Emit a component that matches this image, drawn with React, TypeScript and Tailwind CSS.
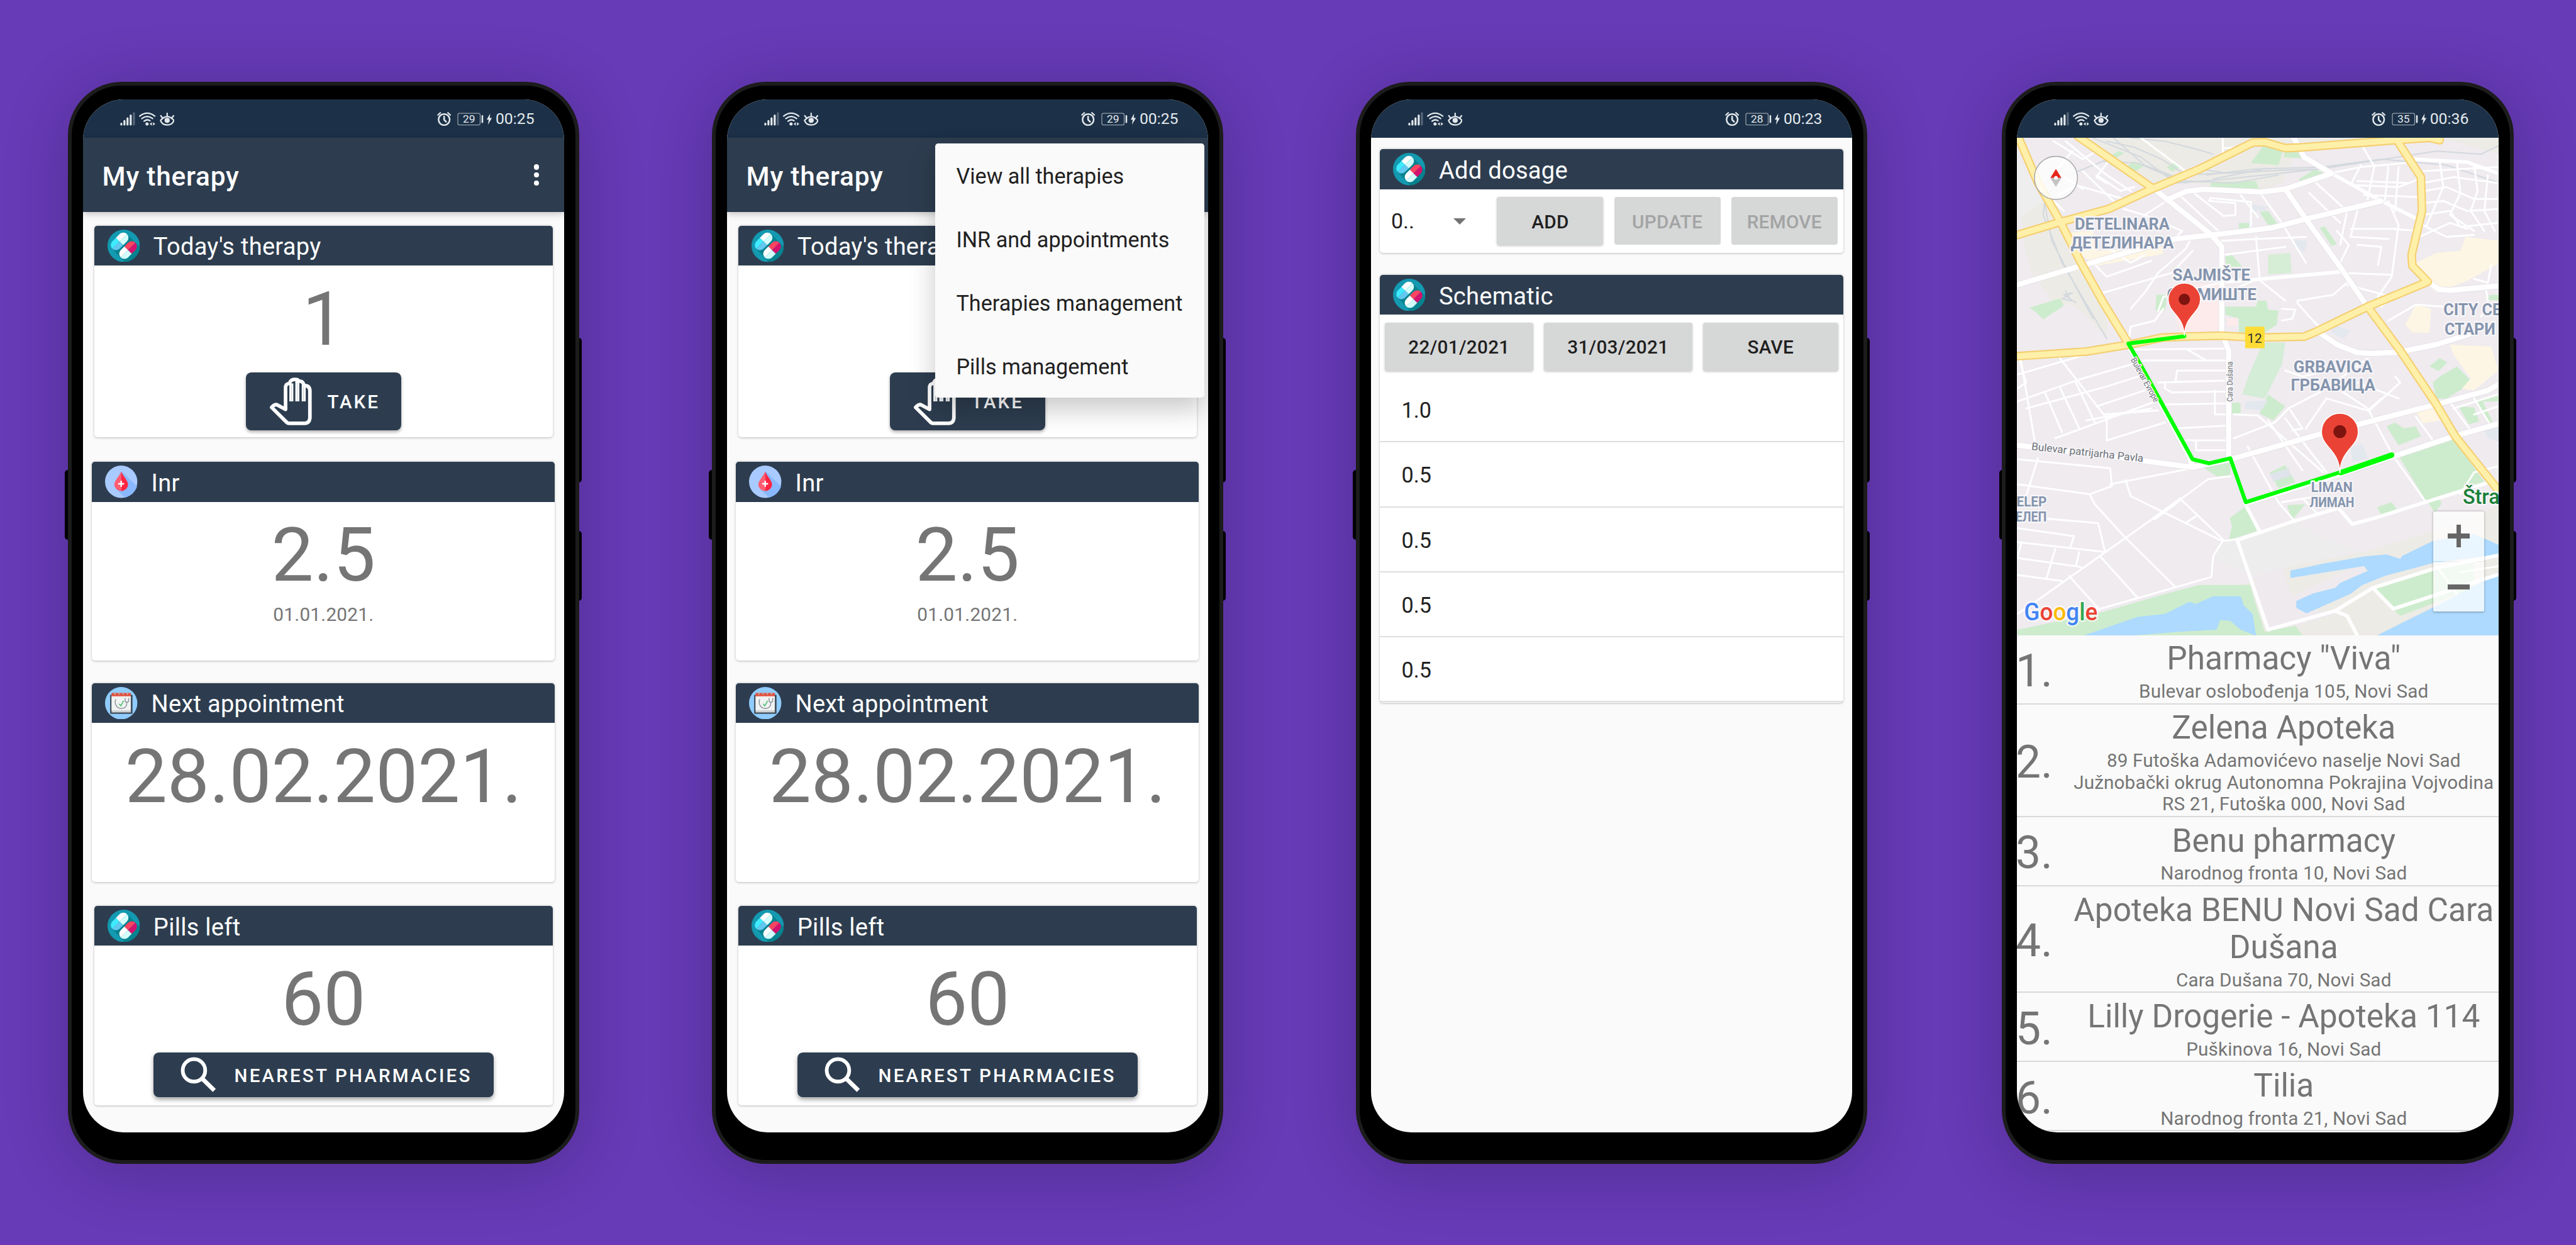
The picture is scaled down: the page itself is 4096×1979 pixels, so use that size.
import React from "react";

/* ---------- status bar ---------- */

function StatusBar({ battery, time }: { battery: string; time: string }) {
  return (
    <div className="flex h-[64px] shrink-0 items-center justify-between bg-[#1c3148] pr-[50px] pl-[62px] text-[#e4e9ed]">
      <svg className="h-[23.3px] w-[91.3px]" viewBox="34 50 274 70" fill="none" stroke="currentColor" strokeLinecap="round">
        <path d="M40 109v4M55.500 95v18M71 82v31M87 68v45" strokeWidth="10" />
        <path d="M103 56v57" strokeWidth="10" opacity="0.3" />
        <path d="M132 71Q170 41 208 71M143 83Q170 62 197 83M154 96Q170 84 184 94" strokeWidth="7" />
        <circle cx="169" cy="110" r="8" fill="currentColor" stroke="none" />
        <path d="M193 101v18l-11-9zM199 101v18l11-9z" fill="currentColor" stroke="none" />
        <path d="M237 92Q270 54 304 92Q296 115 270 115Q244 115 237 92Z" strokeWidth="7" />
        <circle cx="270" cy="92" r="13" fill="currentColor" stroke="none" />
        <path d="M270 57v14M238 69l8 10M302 69l-8 10" strokeWidth="7" />
      </svg>
      <div className="flex items-center gap-[6px]">
        <svg className="h-[23.3px] w-[91.7px]" viewBox="33 50 275 70" fill="none" stroke="currentColor" strokeLinecap="round">
          <circle cx="68" cy="88" r="28" strokeWidth="8" />
          <path d="M68 73v16l10 10" strokeWidth="8" strokeLinejoin="round" />
          <path d="M37 65l12-11M99 65l-12-11" strokeWidth="7" />
          <rect x="137" y="57" width="112" height="58" rx="8" strokeWidth="4" opacity="0.6" />
          <path d="M260 70v31" strokeWidth="8" />
          <path d="M299 58l-17 31h10l-4 25 20-34h-11z" fill="currentColor" stroke="none" />
          <text x="193" y="105" textAnchor="middle" fontSize="55" fill="currentColor" stroke="none" fontFamily="Roboto, sans-serif">
            {battery}
          </text>
        </svg>
        <span className="pt-[2px] text-[26px] leading-none">{time}</span>
      </div>
    </div>
  );
}

/* ---------- icons ---------- */

function PillIcon() {
  return (
    <svg className="size-[54px] shrink-0" viewBox="60 41 162 162">
      <defs>
        <clipPath id="pill-disc">
          <circle cx="141" cy="122" r="81" />
        </clipPath>
      </defs>
      <circle cx="141" cy="122" r="81" fill="#1399b0" />
      <g clipPath="url(#pill-disc)">
        <path d="M158 64L250 156L216 240L190 250L84 137Z" fill="#05838f" />
      </g>
      <g transform="translate(120.500 100) rotate(-45)">
        <path d="M0-26H-26A26 26 0 0 0-52 0H0Z" fill="#3feaff" />
        <path d="M0 26H-26A26 26 0 0 1-52 0H0Z" fill="#62c8f0" />
        <path d="M0-26H26A26 26 0 0 1 52 0H0Z" fill="#ffffff" />
        <path d="M0 26H26A26 26 0 0 0 52 0H0Z" fill="#d2fdfa" />
      </g>
      <g transform="translate(163 143.500) rotate(-45)">
        <path d="M0-26H-26A26 26 0 0 0-52 0H0Z" fill="#ffffff" />
        <path d="M0 26H-26A26 26 0 0 1-52 0H0Z" fill="#d2fdfa" />
        <path d="M0-26H26A26 26 0 0 1 52 0H0Z" fill="#ff4460" />
        <path d="M0 26H26A26 26 0 0 0 52 0H0Z" fill="#d4126e" />
      </g>
    </svg>
  );
}

function DropIcon() {
  return (
    <svg className="size-[54px] shrink-0" viewBox="0 0 54 54">
      <circle cx="27" cy="27" r="27" fill="#a9caff" />
      <path d="M28 10L53.500 35A27 27 0 0 1 33 53.300L18 38Z" fill="#8ab8fe" />
      <path d="M27 10C24 18 15.500 25 15.500 32A11.500 11 0 0 0 27 42.500Z" fill="#ff5d70" />
      <path d="M27 10C30 18 38.500 25 38.500 32A11.500 11 0 0 1 27 42.500Z" fill="#ff2541" />
      <path d="M27 25.500v10M22 30.500h10" stroke="#fff" strokeWidth="2.600" />
    </svg>
  );
}

function CalendarIcon() {
  return (
    <svg className="size-[54px] shrink-0" viewBox="0 0 54 54">
      <circle cx="27" cy="27" r="27" fill="#90ccff" />
      <rect x="8.500" y="13" width="37.500" height="32" rx="1.500" fill="#43505c" />
      <rect x="11" y="16" width="32" height="26.500" fill="#cfd3d4" />
      <rect x="11" y="14" width="32" height="25" fill="#f1f2f2" />
      <rect x="11" y="10" width="32" height="5.500" fill="#e2503f" />
      <path d="M16.500 8v5M23.500 8v5M30.500 8v5M37.500 8v5" stroke="#b9b3b0" strokeWidth="2" />
      <path d="M18 20.500C15 27 19 36 27 36S36.500 31 36.500 26M33.500 18.500v4a3 3 0 0 0 6 0v-4" stroke="#8a9299" strokeWidth="1.500" fill="none" />
      <path d="M23.500 28l3 3.500L31 23" stroke="#43c06d" strokeWidth="1.600" fill="none" />
    </svg>
  );
}

function HandIcon() {
  return (
    <svg className="h-[80px] w-[70px] shrink-0" viewBox="62 32 210 240" fill="none" stroke="#fff">
      <path
        d="M71 182Q84 167 97 168L141 192V78Q143 64 161 62Q166 42 186 42T207 51Q230 48 232 72Q262 72 263 98V236Q260 261 238 262H158Q152 262 147 257Z"
        strokeWidth="18"
        strokeLinejoin="round"
      />
      <path d="M170 62v90M200 50v102M232 72v80" strokeWidth="20" />
      <path d="M171 70v80M201 60v90M231 80v70" strokeWidth="2" stroke="#a9b1b9" />
    </svg>
  );
}

function SearchIcon() {
  return (
    <svg className="size-[59px] shrink-0" viewBox="0 0 59 59" fill="none" stroke="#fff">
      <circle cx="22.500" cy="22.500" r="18.800" strokeWidth="6.200" />
      <path d="M36 36L56.500 56" strokeWidth="7" />
    </svg>
  );
}

/* ---------- shared pieces ---------- */

function Phone({ children }: { children: React.ReactNode }) {
  return (
    <div className="relative h-[1807px] w-[855px] shrink-0">
      <div className="absolute top-[648px] -left-[5px] h-[117px] w-[20px] rounded-[5px] bg-black" />
      <div className="absolute top-[427px] -right-[4px] h-[242px] w-[20px] rounded-[5px] bg-black" />
      <div className="absolute top-[750px] -right-[4px] h-[117px] w-[20px] rounded-[5px] bg-black" />
      <div className="relative h-full w-full rounded-[90px] border-[7px] border-[#1c1c1c] bg-black px-[19px] pt-[23px] pb-[46px] shadow-[0_12px_110px_rgba(0,0,0,0.2)]">
        <div className="relative flex h-full flex-col overflow-hidden rounded-[68px] bg-[#fafafa]">{children}</div>
      </div>
    </div>
  );
}

function Card({ icon, title, className, children }: { icon: React.ReactNode; title: string; className: string; children: React.ReactNode }) {
  return (
    <section className={`flex flex-col overflow-hidden rounded-[5px] bg-white shadow-[0_1px_4px_rgba(0,0,0,0.25)] ${className}`}>
      <header className="flex h-[66.500px] shrink-0 items-center gap-[23px] bg-[#2d3d4f] pl-[22px] text-white">
        {icon}
        <h2 className="pt-[6px] text-[40px] leading-[46px] tracking-[0.007em]">{title}</h2>
      </header>
      {children}
    </section>
  );
}

function BigValue({ children }: { children: React.ReactNode }) {
  return <p className="mt-[16.500px] text-center text-[125.500px] leading-[146px] text-[#757575]">{children}</p>;
}

function TherapyScreen({ menuOpen = false }: { menuOpen?: boolean }) {
  const items = ["View all therapies", "INR and appointments", "Therapies management", "Pills management"];
  return (
    <>
      <StatusBar battery="29" time="00:25" />
      <div className="z-10 flex h-[124px] shrink-0 items-center justify-between bg-[#2d3d4f] pr-[42px] pl-[32.500px] shadow-[0_3px_12px_rgba(0,0,0,0.25)]">
        <h1 className="pt-[6px] text-[44.600px] leading-[52px] font-medium tracking-[0.018em] text-white">My therapy</h1>
        <div className="flex flex-col gap-[4.500px]">
          <i className="size-[9px] rounded-full bg-white" />
          <i className="size-[9px] rounded-full bg-white" />
          <i className="size-[9px] rounded-full bg-white" />
        </div>
      </div>

      <Card icon={<PillIcon />} title="Today's therapy" className="mx-[19px] mt-[22.500px] h-[354px]">
        <BigValue>1</BigValue>
        <button className="mt-[16.500px] flex h-[96.500px] w-[260px] items-center self-center rounded-[9px] bg-[#2d3d4f] pl-[40.500px] text-[31px] font-medium tracking-[0.1em] text-white shadow-[0_3px_6px_rgba(0,0,0,0.3)]">
          <HandIcon />
          <span className="pt-[3px] pl-[26px]">TAKE</span>
        </button>
      </Card>

      <Card icon={<DropIcon />} title="Inr" className="mx-[15.500px] mt-[41px] h-[332px]">
        <BigValue>2.5</BigValue>
        <p className="mt-[8px] text-center text-[31.300px] leading-[36px] tracking-[0.008em] text-[#757575]">01.01.2021.</p>
      </Card>

      <Card icon={<CalendarIcon />} title="Next appointment" className="mx-[15.500px] mt-[37px] h-[332px]">
        <BigValue>28.02.2021.</BigValue>
      </Card>

      <Card icon={<PillIcon />} title="Pills left" className="mx-[19px] mt-[40.500px] h-[332.500px]">
        <BigValue>60</BigValue>
        <button className="mt-[16px] flex h-[74px] w-[568px] items-center self-center rounded-[9px] bg-[#2d3d4f] pl-[45px] text-[31px] font-medium tracking-[0.108em] text-white shadow-[0_4px_8px_rgba(0,0,0,0.35)]">
          <SearchIcon />
          <span className="pt-[4px] pl-[31px] whitespace-nowrap">NEAREST PHARMACIES</span>
        </button>
      </Card>

      {menuOpen && (
        <ul className="absolute top-[73px] right-[6px] z-20 w-[450.500px] rounded-[5px] bg-[#fafafa] shadow-[0_18px_44px_rgba(0,0,0,0.22)]">
          {items.map((item) => (
            <li key={item} className="flex h-[106.200px] items-center pt-[4px] pl-[35.500px] text-[35.900px] text-[#212121]">
              {item}
            </li>
          ))}
        </ul>
      )}
    </>
  );
}

/* ---------- dosage screen ---------- */

function GreyButton({ label, className, disabled = false }: { label: string; className: string; disabled?: boolean }) {
  return (
    <button
      disabled={disabled}
      className={`flex items-center justify-center rounded-[4px] bg-[#d6d7d7] pt-[4px] text-[31.200px] font-medium tracking-[0.01em] ${
        disabled ? "text-[#a3a4a4]" : "text-[#1f1f1f] shadow-[0_2px_4px_rgba(0,0,0,0.22)]"
      } ${className}`}
    >
      {label}
    </button>
  );
}

function DosageScreen() {
  return (
    <>
      <StatusBar battery="28" time="00:23" />
      <Card icon={<PillIcon />} title="Add dosage" className="mx-[15px] mt-[19px] h-[173px]">
        <div className="flex items-start gap-[18px] pt-[13.500px] pr-[9.500px]">
          <div className="flex h-[79px] w-[178px] items-center pt-[2px] pl-[19px]">
            <span className="w-[104px] text-[35.700px] text-[#212121]">0..</span>
            <i className="border-x-[11px] border-t-[11px] border-x-transparent border-t-[#737373]" />
          </div>
          <GreyButton label="ADD" className="h-[79.500px] flex-1" />
          <GreyButton label="UPDATE" className="h-[79.500px] flex-1" disabled />
          <GreyButton label="REMOVE" className="h-[79.500px] flex-1" disabled />
        </div>
      </Card>
      <Card icon={<PillIcon />} title="Schematic" className="mx-[15px] mt-[37px] h-[714px]">
        <div className="flex gap-[17.500px] px-[8.500px] pt-[13px]">
          <GreyButton label="22/01/2021" className="h-[80px] w-[248px]" />
          <GreyButton label="31/03/2021" className="h-[80px] w-[248.500px]" />
          <GreyButton label="SAVE" className="h-[80px] flex-1" />
        </div>
        <ul className="pt-[12px] text-[35.900px] text-[#212121]">
          {["1.0", "0.5", "0.5", "0.5", "0.5"].map((dose, i) => (
            <li key={i} className="flex h-[108.500px] items-center border-b-[2.200px] border-[#dedede] pt-[4px] pl-[36.500px]">
              {dose}
            </li>
          ))}
        </ul>
      </Card>
    </>
  );
}

/* ---------- pharmacies screen ---------- */

const px = (x: number) => Math.round((x - 70) * 5.74) / 10;
const py = (y: number) => Math.round((y / 3 - 111) * 10) / 10;
function project(points: string) {
  return points
    .split(" ")
    .map((p) => {
      const [x, y] = p.split(",").map(Number);
      return `${px(x)},${py(y)}`;
    })
    .join(" ");
}

const AREAS: [string, string][] = [
  ["#edebe6", "90,334 620,334 1160,334 1160,350 890,378 840,560 780,600 560,560 470,560 250,334"],
  ["#edebe6", "1300,334 1480,334 1480,420 1340,350"],
  ["#edebe6", "70,560 130,580 200,780 250,960 330,1240 330,1330 240,1180 170,1150 110,1010 90,880"],
  ["#eeeeef", "70,430 120,560 150,650 70,740"],
  ["#edebe6", "600,2640 745,2560 860,2480 1100,2400 1290,2300 1480,2170 1480,2840 760,2840 740,2600"],
  ["#efeaee", "840,2480 870,2630 1080,2460 1090,2570 880,2690 1000,2720 860,2790 800,2800 750,2570"],
  ["#ededee", "680,2350 880,2250 960,2340 1070,2400 860,2480 750,2530 660,2460 640,2420"],
  ["#cdeccd", "785,375 845,390 830,470 750,460"],
  ["#cdeccd", "850,400 880,395 910,438 845,430"],
  ["#cdeccd", "385,480 410,450 437,475 410,505"],
  ["#cdeccd", "340,425 365,400 382,410 355,435"],
  ["#cdeccd", "505,480 525,458 545,478 520,503"],
  ["#cdeccd", "635,555 765,550 775,598 630,590"],
  ["#cdeccd", "890,540 935,492 965,512 890,572"],
  ["#cdeccd", "715,760 745,760 745,790 715,790"],
  ["#cdeccd", "775,705 800,700 830,770 800,770"],
  ["#cdeccd", "950,785 965,778 1000,865 985,875"],
  ["#d6edd6", "800,920 865,910 868,1010 800,1018"],
  ["#cdeccd", "675,930 695,920 725,980 680,985"],
  ["#cdeccd", "675,1180 765,1180 770,1150 795,1150 800,1195 830,1200 825,1270 790,1310 715,1310 715,1240 675,1220"],
  ["#cdeccd", "475,1120 505,1120 500,1200 472,1200"],
  ["#cdeccd", "105,1185 195,1138 205,1175 145,1243 125,1210"],
  ["#d4edd6", "785,1360 850,1360 840,1470 790,1640 725,1620 740,1540"],
  ["#cdeccd", "800,1620 850,1680 815,1750 775,1715"],
  ["#cdeccd", "695,1662 720,1662 720,1715 695,1715"],
  ["#cdeccd", "1270,1480 1300,1438 1322,1460 1297,1502"],
  ["#cdeccd", "1280,1560 1300,1530 1350,1480 1395,1560 1320,1640 1290,1640"],
  ["#cdeccd", "1355,1680 1400,1685 1415,1755 1385,1770"],
  ["#cdeccd", "1400,1650 1470,1620 1470,1655 1425,1655 1455,1760 1440,1760"],
  ["#cdeccd", "1145,1780 1170,1760 1195,1790 1230,1780 1245,1830 1180,1875"],
  ["#cdeccd", "1183,1935 1340,1845 1435,2070 1260,2155"],
  ["#cdeccd", "1265,2160 1300,2145 1305,2170 1285,2210"],
  ["#cdeccd", "1118,2185 1160,2160 1175,2195 1130,2230"],
  ["#cdeccd", "805,2010 850,1975 880,2060 830,2090"],
  ["#dfe3ea", "805,2020 860,1990 865,2030 815,2055"],
  ["#cdeccd", "855,2175 908,2170 870,2250"],
  ["#cdeccd", "610,1985 690,1960 690,2025 650,2030"],
  ["#cdeccd", "735,2180 775,2300 685,2350 695,2280 688,2240"],
  ["#cdeccd", "1445,1120 1475,1120 1475,1150 1440,1145"],
  ["#cdeccd", "70,2800 320,2710 520,2610 600,2575 748,2575 760,2650 790,2810 880,2780 900,2830 70,2830"],
  ["#cdeccd", "1108,2590 1280,2495 1400,2460 1400,2590 1185,2730 1165,2700"],
  ["#fef6e4", "1375,830 1475,850 1475,960 1380,1050 1290,1110 1250,1050 1230,960 1290,910 1360,900"],
  ["#fef6e4", "1230,1170 1275,1190 1270,1310 1220,1310 1200,1270"],
  ["#fef6e4", "1330,1370 1450,1380 1470,1500 1400,1600 1365,1590 1390,1540 1340,1420"],
  ["#fef6e4", "1230,1700 1290,1680 1315,1745 1250,1765"],
  ["#fef6e4", "220,810 290,795 300,900 420,890 490,880 495,915 300,975 255,920"],
  ["#fdeaea", "525,1065 660,1065 658,1300 545,1310 530,1240"],
  ["#fdeaea", "680,1240 710,1235 712,1275 680,1280"],
  ["#e3e8ee", "875,845 915,850 905,905 875,880"],
  ["#e3e8ee", "750,665 800,680 790,700 750,700"],
  ["#e3e8ee", "735,1655 800,1650 780,1700 730,1690"],
  ["#e3e8ee", "1040,1880 1075,1870 1090,1940 1045,1960"],
  ["#e3e8ee", "990,1270 1040,1300 1020,1340 985,1310"],
  ["#e3e8ee", "1425,1790 1475,1770 1475,1860 1440,1840"],
  ["#addafe", "260,2830 420,2735 500,2720 570,2660 590,2670 640,2632 720,2632 730,2680 755,2720 765,2830 720,2800 690,2755 660,2752 650,2800 540,2810 400,2830"],
  ["#addafe", "865,2503 960,2468 1080,2432 1145,2422 1185,2445 1190,2430 1280,2355 1400,2320 1480,2380 1480,2420 1280,2465 1140,2530 1075,2575 1040,2620 912,2718 882,2690 882,2655 930,2618 995,2590 1010,2565 1090,2505 1080,2480 865,2540"],
  ["#addafe", "1115,2830 1290,2680 1400,2580 1480,2500 1480,2830"],
];

const RAILS = [
  "290,334 430,430 530,560 650,545 950,490 1290,400 1420,415 1475,370",
  "350,334 440,470 560,550 700,560 830,520",
  "400,334 500,350 590,390 640,415",
  "330,350 410,380 490,440 560,520 780,500",
  "620,520 760,490 960,480 1130,440 1320,470 1475,560",
  "600,490 680,510 850,495 970,490",
  "640,540 800,485",
  "150,640 145,720 200,960 330,1340",
  "150,670 170,850 240,1080 290,1240",
  "210,1100 225,1150 200,1140 230,1110 205,1120 240,1160",
  "150,640 190,540 320,450 420,460 560,560",
];

const STREETS = [
  "175,350 260,440 300,400 350,460 420,540", "230,400 180,500 260,590", "300,520 370,600 410,580", "260,500 350,650", "190,620 240,570 380,640",
  "340,440 300,530 330,560", "210,350 330,520 400,600", "205,700 175,650", "430,334 520,450 560,500", "668,334 668,420", "668,385 740,380",
  "545,625 655,800", "580,605 670,725 705,720 705,660 628,650 632,635 750,655 750,785", "775,605 840,760 910,960", "720,620 770,730",
  "495,660 440,720 550,800 520,850", "440,720 380,690", "575,840 560,890 480,1010 440,1110 400,1190",
  "300,1120 520,1010 580,900", "290,960 330,1030 460,950", "320,870 400,960 440,920", "480,1200 495,1130 660,1060",
  "395,1330 400,1280 470,1250 495,1190", "670,920 850,880", "665,850 770,840 910,830", "765,830 775,1040", "690,1100 770,1040 850,1150",
  "885,1150 990,1120 1030,1060", "885,1160 920,1230 960,1300", "840,1190 880,1195 870,1240 840,1250", "1010,1010 1160,1020",
  "1150,650 1180,770 1160,1030 1120,1130", "1165,790 1240,800", "1060,870 1130,880 1120,970", "1000,800 1035,870 1010,960", "920,610 1010,760",
  "940,560 1030,700 1010,870", "1060,700 1040,830 1150,840", "1040,790 1180,790", "1070,470 1040,570 1180,580 1240,540", "1075,375 1110,480", "985,510 1070,480 1200,460",
  "1110,470 1090,640", "1150,480 1140,650", "1180,480 1170,700", "1060,550 1210,560", "1080,620 1240,630", "1250,500 1470,480",
  "1250,560 1340,530 1470,560", "1255,600 1320,580 1400,640 1470,640", "1250,660 1310,650 1380,700 1470,690", "1250,720 1330,700 1360,780 1470,760",
  "1300,455 1310,580 1260,780", "1350,460 1360,610 1330,720 1400,800", "1400,470 1410,600 1390,700 1430,800", "1440,520 1430,700 1460,800", "1240,830 1330,760 1380,790",
  "1250,770 1320,830 1400,820", "1450,970 1440,1060 1400,1040", "1435,1090 1440,1160 1420,1230", "1030,1070 1160,1130 1130,1180", "1150,1250 1230,1170 1310,1180",
  "70,1520 290,1410", "190,1430 330,1740 330,1850", "80,1450 120,1850", "70,1655 250,1545 400,1470", "95,1690 330,1580 440,1520", "150,1610 200,1810", "195,1590 250,1790",
  "240,1560 295,1760", "180,1840 480,1650", "300,1680 440,1600", "320,1720 480,1700", "330,1850 500,1760", "270,1750 460,1690", "75,1440 95,1560 70,1590",
  "395,1395 680,1390", "430,1450 680,1450", "530,1560 535,1500 680,1500", "480,1560 680,1550", "500,1560 500,1590 520,1610 680,1605", "490,1670 680,1665", "530,1790 690,1775",
  "560,1850 690,1850", "590,1850 590,1900 690,1900", "645,1600 645,1720 690,1720", "560,1390 620,1450",
  "700,1840 820,1760 860,1690 960,1600 1090,1440", "700,1720 770,1725 860,1860 960,2010", "850,1740 920,1900 970,2010", "800,1750 900,2000", "740,1880 830,2160 880,2260",
  "865,1700 900,1790 870,1800", "910,1790 970,1640 1090,1700 1130,1640", "1010,1600 1090,1690 1165,1930 1260,2160", "1095,1700 1185,1560 1170,1530", "1060,1560 1180,1640", "850,1500 900,1530 1000,1490",
  "1230,1730 1280,1850", "1330,1660 1390,1800", "1400,1640 1450,1780", "1340,1690 1470,1620", "1400,1720 1470,1680",
  "70,1945 340,1990 345,2080 280,2120 70,2070", "130,1940 95,2130 90,2180", "70,2230 305,2265 325,2410 70,2360", "580,1990 340,2070",
  "280,2120 295,2170 380,2330 530,2585", "385,2050 400,2130 660,2350 670,2355 710,2345", "545,2145 310,2430 130,2650", "545,2145 670,2350 640,2430 635,2535 300,2700",
  "690,2030 625,2045 470,2240", "590,2230 560,2265", "70,2290 235,2330 225,2380", "180,2395 155,2540", "80,2370 70,2440 255,2485", "310,2430 420,2640", "250,2410 240,2480",
  "70,2525 200,2555", "220,2530 310,2700", "130,2650 70,2720", "740,2180 770,2300",
  "840,2160 945,2130", "900,2140 945,2220", "1470,1980 1400,2010 1360,2120",
  "1290,2480 1350,2620", "1360,2510 1475,2480",
];

const AVENUES = [
  "465,585 635,820 665,880 665,1310 685,1400 685,1940",
  "70,1070 255,975 415,895 530,840 640,820 810,785 910,740 1130,650",
  "505,645 560,602 610,592 780,605 850,590 985,512",
  "875,334 905,430 985,512",
  "850,590 910,740 1010,980 1085,1170",
  "950,1310 1000,1370 1060,1410 1100,1415 1180,1408 1290,1370 1400,1310",
  "1265,1055 1300,1095 1330,1098 1475,1075",
  "70,1875 250,1910 580,1985 690,1945 950,1820 1290,1670 1440,1600 1475,1565",
  "735,2165 1010,2020 1340,1830 1475,1765",
  "395,1380 430,1480 570,1930 580,1985",
];

const LANES = [
  "985,512 1130,650 1240,745",
  "665,1055 760,1045 1010,1005",
  "1215,440 1380,455 1475,515",
  "735,2175 775,2305",
  "710,2350 875,2255 1005,2190 1045,2270 1110,2240 1435,2065",
  "710,2350 800,2800 995,2705 1105,2590 1290,2490 1475,2425",
  "995,2705 1030,2730 1060,2830",
  "1105,2590 1165,2695 1475,2520",
  "545,2145 470,2240",
];

const HIGHWAYS = [
  "70,320 130,560 195,755 255,960 320,1160 395,1370",
  "70,820 195,755 335,690 465,587 600,490 755,357 790,355 850,385 890,382 1170,345 1270,333 1300,345",
  "245,325 465,587",
  "1175,345 1245,530 1248,700 1218,920 1220,975 1265,1055 1090,1180 940,1305 905,1330 760,1335 665,1325 555,1330 490,1335 395,1370 270,1405 70,1428",
  "1090,1180 1185,1400 1290,1670 1345,1830 1480,2120",
];

function MapLabel({ x, x2, y, size, children, color = "#8494ad", weight = 700 }: { x: number; x2?: number; y: number; size: number; children: string; color?: string; weight?: number }) {
  return (
    <text
      x={px(x)}
      y={py(y)}
      fontSize={size}
      fontWeight={weight}
      fill={color}
      stroke="#f7f5f8"
      strokeWidth="5"
      strokeLinejoin="round"
      paintOrder="stroke"
      textLength={x2 ? px(x2) - px(x) : undefined}
      lengthAdjust="spacingAndGlyphs"
    >
      {children}
    </text>
  );
}

function Pin({ x, y, scale }: { x: number; y: number; scale: number }) {
  return (
    <g transform={`translate(${px(x)} ${py(y)}) scale(${scale})`}>
      <path d="M0 0C-1-35-27-38-27-61A27 27 0 0 1 27-61C27-38 1-35 0 0Z" fill="#ea4335" stroke="#fff" strokeWidth="1.500" />
      <circle cx="0" cy="-61" r="9.500" fill="#7d1410" />
    </g>
  );
}

function CityMap() {
  return (
    <svg className="absolute inset-0 h-full w-full" viewBox="0 0 803 831" fontFamily="Roboto, sans-serif">
      <rect width="803" height="831" fill="#efebef" />
      {AREAS.map(([fill, pts], i) => (
        <polygon key={i} points={project(pts)} fill={fill} />
      ))}
      <g fill="none" strokeLinejoin="round" strokeLinecap="round">
        {RAILS.map((p, i) => (
          <polyline key={i} points={project(p)} stroke="#d3d9de" strokeWidth="2.200" />
        ))}
        {STREETS.map((p, i) => (
          <polyline key={i} points={project(p)} stroke="#ffffff" strokeWidth="3.200" />
        ))}
        {LANES.map((p, i) => (
          <polyline key={i} points={project(p)} stroke="#ffffff" strokeWidth="6" />
        ))}
        {AVENUES.map((p, i) => (
          <polyline key={i} points={project(p)} stroke="#e2dee4" strokeWidth="10.500" />
        ))}
        {AVENUES.map((p, i) => (
          <polyline key={i} points={project(p)} stroke="#ffffff" strokeWidth="9" />
        ))}
        {HIGHWAYS.map((p, i) => (
          <polyline key={i} points={project(p)} stroke="#f5cf70" strokeWidth="14.500" />
        ))}
        {HIGHWAYS.map((p, i) => (
          <polyline key={i} points={project(p)} stroke="#fff0a9" strokeWidth="10" />
        ))}
        <polyline points={project("556,1328 393,1365 430,1475 580,1945 628,1965 690,1940 735,2160 1010,2010 1160,1924")} stroke="#00ff00" strokeWidth="6.500" />
        <polyline points={project("1012,2012 1160,1924")} stroke="#00ff00" strokeWidth="9" />
      </g>

      <rect x={px(733)} y={py(1280)} width="32.500" height="36" fill="#ffdc35" />
      <text x={px(761)} y={py(1360)} fontSize="22" textAnchor="middle" fill="#333">
        12
      </text>

      <MapLabel x={237} x2={513} y={793} size={28}>DETELINARA</MapLabel>
      <MapLabel x={225} x2={525} y={888} size={28}>ДЕТЕЛИНАРА</MapLabel>
      <MapLabel x={522} x2={748} y={1050} size={28}>SAJMIŠTE</MapLabel>
      <MapLabel x={505} x2={766} y={1146} size={28}>САЈМИШТЕ</MapLabel>
      <MapLabel x={1311} x2={1598} y={1222} size={28}>CITY CENTAR</MapLabel>
      <MapLabel x={1314} x2={1590} y={1319} size={28}>СТАРИ ГРАД</MapLabel>
      <MapLabel x={874} x2={1104} y={1508} size={28}>GRBAVICA</MapLabel>
      <MapLabel x={866} x2={1112} y={1602} size={28}>ГРБАВИЦА</MapLabel>
      <MapLabel x={925} x2={1046} y={2108} size={22.5}>LIMAN</MapLabel>
      <MapLabel x={921} x2={1051} y={2183} size={22.5}>ЛИМАН</MapLabel>
      <MapLabel x={44} x2={155} y={2182} size={22.5}>TELEP</MapLabel>
      <MapLabel x={42} x2={155} y={2256} size={22.5}>ТЕЛЕП</MapLabel>
      <MapLabel x={1367} y={2168} size={34} color="#188038" weight={500}>Štrand</MapLabel>

      <g fill="#6d7378" stroke="#f7f5f8" strokeWidth="3.500" paintOrder="stroke" strokeLinejoin="round" fontSize="15">
        <text transform="translate(189 371) rotate(61)" textLength="82" lengthAdjust="spacingAndGlyphs" fontSize="14">
          Bulevar Evrope
        </text>
        <text transform="translate(360 441) rotate(-90)" textLength="67" lengthAdjust="spacingAndGlyphs" fontSize="14">
          Cara Dušana
        </text>
        <text transform="translate(23 521.500) rotate(6.200)" textLength="188" lengthAdjust="spacingAndGlyphs" fontSize="17.500">
          Bulevar patrijarha Pavla
        </text>
      </g>

      <Pin x={556} y={1326} scale={1} />
      <Pin x={1009} y={2015} scale={1.14} />

      <text x="11" y="806" fontSize="40" fontWeight="500" textLength="123" lengthAdjust="spacingAndGlyphs" strokeOpacity="0.700" strokeWidth="5" paintOrder="stroke" stroke="#ffffff" strokeLinejoin="round">
        <tspan fill="#4285f4">G</tspan>
        <tspan fill="#ea4335">o</tspan>
        <tspan fill="#fbbc05">o</tspan>
        <tspan fill="#4285f4">g</tspan>
        <tspan fill="#34a853">l</tspan>
        <tspan fill="#ea4335">e</tspan>
      </text>

      <circle cx="64.300" cy="67" r="36" fill="#ffffff" fillOpacity="0.800" stroke="#a5a5a5" strokeWidth="1.500" />
      <path d="M64.300 52L73.500 67H55Z" fill="#e8261c" />
      <path d="M64.300 82L73.500 67H55Z" fill="#c2c2c2" />
      <circle cx="64.300" cy="67" r="3" fill="#ffffff" />
    </svg>
  );
}

const PHARMACIES = [
  { name: "Pharmacy \"Viva\"", address: ["Bulevar oslobođenja 105, Novi Sad"] },
  { name: "Zelena Apoteka", address: ["89 Futoška Adamovićevo naselje Novi Sad", "Južnobački okrug Autonomna Pokrajina Vojvodina", "RS 21, Futoška 000, Novi Sad"] },
  { name: "Benu pharmacy", address: ["Narodnog fronta 10, Novi Sad"] },
  { name: "Apoteka BENU Novi Sad Cara Dušana", address: ["Cara Dušana 70, Novi Sad"] },
  { name: "Lilly Drogerie - Apoteka 114", address: ["Puškinova 16, Novi Sad"] },
  { name: "Tilia", address: ["Narodnog fronta 21, Novi Sad"] },
];

function PharmaciesScreen() {
  return (
    <>
      <StatusBar battery="35" time="00:36" />
      <div className="relative h-[830.500px] shrink-0 overflow-hidden">
        <CityMap />
        <div className="absolute right-[24px] bottom-[39px] flex w-[85px] flex-col gap-[2px] overflow-hidden rounded-[3px] shadow-[0_1px_4px_rgba(0,0,0,0.35)]">
          <div className="relative flex h-[83px] items-center justify-center bg-white/75">
            <i className="h-[8px] w-[37px] bg-[#666]" />
            <i className="absolute h-[37px] w-[8px] bg-[#666]" />
          </div>
          <div className="flex h-[83px] items-center justify-center bg-white/75">
            <i className="h-[8px] w-[37px] bg-[#666]" />
          </div>
        </div>
      </div>
      <ol className="text-[#757575]">
        {PHARMACIES.map((p, i) => (
          <li key={p.name} className="flex items-center border-b-[2.200px] border-[#d9d9d9] pt-[8px] pb-[1px]">
            <span className="-ml-[2.500px] w-[84px] shrink-0 text-[75px] leading-[84px] whitespace-nowrap">{i + 1}.</span>
            <div className="-mr-[5px] flex-1 text-center">
              <h3 className="text-[54px] leading-[62.500px]">{p.name}</h3>
              <div className="pt-[5.500px] text-[31.200px] leading-[36.500px] tracking-[0.004em]">
                {p.address.map((line) => (
                  <p key={line} className="whitespace-nowrap">
                    {line}
                  </p>
                ))}
              </div>
            </div>
          </li>
        ))}
      </ol>
    </>
  );
}

export default function App() {
  return (
    <div className="h-screen w-screen overflow-hidden bg-[#673ab7]">
      <main className="flex h-[2080px] w-[4304px] items-start gap-[221px] bg-[#673ab7] pt-[137px] pl-[113px] font-['Roboto',sans-serif] [zoom:0.95167]">
        <Phone>
          <TherapyScreen />
        </Phone>
        <Phone>
          <TherapyScreen menuOpen />
        </Phone>
        <Phone>
          <DosageScreen />
        </Phone>
        <div className="pl-[4px]">
          <Phone>
            <PharmaciesScreen />
          </Phone>
        </div>
      </main>
    </div>
  );
}
